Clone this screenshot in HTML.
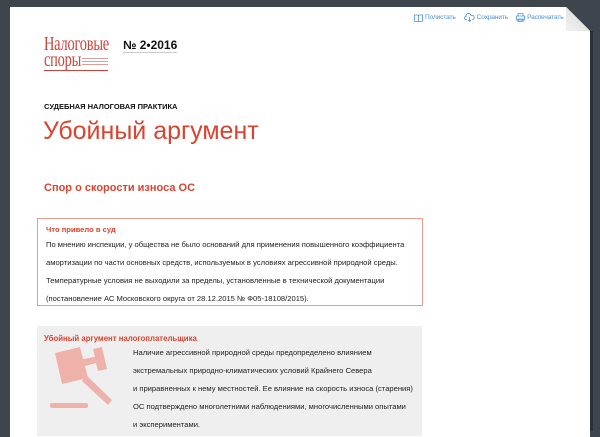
<!DOCTYPE html>
<html><head><meta charset="utf-8"><style>
body{margin:0;width:600px;height:427px;background:#3e454c;overflow:hidden;font-family:"Liberation Sans","DejaVu Sans",sans-serif;position:relative}
.page{position:absolute;left:10px;top:7px;width:580px;height:430px;background:#fff;clip-path:polygon(0 0,556px 0,580px 24px,580px 100%,0 100%)}
.shadow{position:absolute;left:590px;top:31px;width:3px;height:400px;background:#2b3137}
.fold{position:absolute;left:566px;top:7px;width:24px;height:24px;background:linear-gradient(225deg,transparent 50%,#e4e4e4 50%,#f2f2f2 100%)}
.tools{position:absolute;top:13px;left:414px;font-size:6.5px;color:#4a90d9;white-space:nowrap;display:flex;align-items:center;letter-spacing:-0.1px}
.tools svg{margin-right:2px}
.tools span{margin-right:8px;display:flex;align-items:center}
.abs{position:absolute}
.red{color:#d9432f}
p{margin:0}
.txt{font-size:7.6px;color:#222;line-height:18px}
</style></head><body>
<div class="page"></div><div class="fold"></div><div class="shadow"></div>
<div class="tools">
<span><svg width="9" height="8" viewBox="0 0 9 8" fill="none" stroke="#4a90d9" stroke-width="0.8"><path d="M0.5 1h3a1 1 0 0 1 1 1v5.5H1.5a1 1 0 0 1-1-1z M8.5 1h-3a1 1 0 0 0-1 1v5.5h3a1 1 0 0 0 1-1z"/></svg>Полистать</span>
<span><svg width="11" height="9" viewBox="0 0 11 9" fill="none" stroke="#4a90d9" stroke-width="0.8"><path d="M3 6.5H2a1.5 1.5 0 0 1 0-3 2.5 2.5 0 0 1 5-1 2 2 0 0 1 2 4H8 M5.5 4v4.5 M4 7l1.5 1.5L7 7"/></svg>Сохранить</span>
<span><svg width="9" height="9" viewBox="0 0 9 9" fill="none" stroke="#4a90d9" stroke-width="0.8"><path d="M2 3V0.5h5V3 M0.5 3h8v4h-8z M2 6h5v2.5H2z"/></svg>Распечатать</span></div>
<div class="abs" style="left:44px;top:36px;font-family:'Liberation Serif',serif;color:#c8453a;font-size:20px;line-height:16px;transform:scaleX(0.72);transform-origin:0 0;letter-spacing:-0.3px">Налоговые<br>споры</div>
<div class="abs" style="left:82px;top:58px;width:26px;height:8px;background:repeating-linear-gradient(#d9a09a 0 1px,transparent 1px 3px)"></div>
<div class="abs" style="left:44px;top:70px;width:64px;height:1px;background:#c8453a"></div>
<div class="abs" style="left:123px;top:38px;font-size:12px;font-weight:bold;color:#111;border-bottom:1px solid #ccc">№ 2•2016</div>
<div class="abs" style="left:44px;top:102px;font-size:7.5px;font-weight:bold;color:#111">СУДЕБНАЯ НАЛОГОВАЯ ПРАКТИКА</div>
<div class="abs red" style="left:43px;top:117px;font-size:25px">Убойный аргумент</div>
<div class="abs red" style="left:44px;top:182px;font-size:11px;font-weight:bold">Спор о скорости износа ОС</div>
<div class="abs" style="left:37px;top:218px;width:376px;height:82px;border:1px solid #ec9a8e;padding:4px 0 0 8px">
<p class="red" style="font-size:7.6px;font-weight:bold;line-height:13px">Что привело в суд</p>
<p class="txt">По мнению инспекции, у общества не было оснований для применения повышенного коэффициента<br>амортизации по части основных средств, используемых в условиях агрессивной природной среды.<br>Температурные условия не выходили за пределы, установленные в технической документации<br>(постановление АС Московского округа от 28.12.2015 № Ф05-18108/2015).</p></div>
<div class="abs" style="left:37px;top:326px;width:385px;height:110px;background:#efefef"></div>
<div class="abs red" style="left:44px;top:334px;font-size:7.8px;font-weight:bold">Убойный аргумент налогоплательщика</div>
<svg class="abs" style="left:50px;top:345px" width="75" height="75"><g fill="#eeb2aa"><path d="M5 8 L30 2 L33 14 L45 12 L43 4 L52 2 L57 24 L48 26 L46 18 L35 21 L38 33 L12 39 Z"/><path d="M36 30 L62 55 L58 60 L32 36 Z"/><rect x="0" y="58" width="38" height="5" rx="2"/></g></svg>
<div class="abs txt" style="left:133px;top:344px">Наличие агрессивной природной среды предопределено влиянием<br>экстремальных природно-климатических условий Крайнего Севера<br>и приравненных к нему местностей. Ее влияние на скорость износа (старения)<br>ОС подтверждено многолетними наблюдениями, многочисленными опытами<br>и экспериментами.</div>
</body></html>
